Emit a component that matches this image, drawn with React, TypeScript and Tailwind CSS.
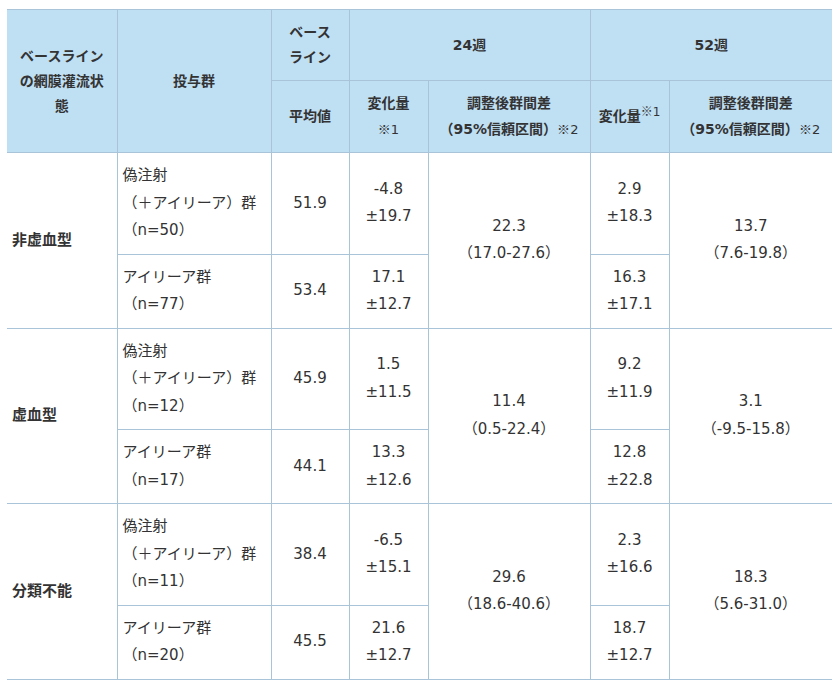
const FONT = { fontFamily: '"DejaVu Sans", "Noto Sans CJK JP", sans-serif' };
const CJK = { fontFamily: '"Noto Sans CJK JP", sans-serif' };

type Sub = { group: string[]; base: string; c24: string[]; c52: string[] };
type Section = { label: string; d24: string[]; d52: string[]; rows: Sub[] };

const SECTIONS: Section[] = [
  {
    label: '非虚血型',
    d24: ['22.3', '（17.0-27.6）'],
    d52: ['13.7', '（7.6-19.8）'],
    rows: [
      { group: ['偽注射', '（＋アイリーア）群', '（n=50）'], base: '51.9', c24: ['-4.8', '±19.7'], c52: ['2.9', '±18.3'] },
      { group: ['アイリーア群', '（n=77）'], base: '53.4', c24: ['17.1', '±12.7'], c52: ['16.3', '±17.1'] },
    ],
  },
  {
    label: '虚血型',
    d24: ['11.4', '（0.5-22.4）'],
    d52: ['3.1', '（-9.5-15.8）'],
    rows: [
      { group: ['偽注射', '（＋アイリーア）群', '（n=12）'], base: '45.9', c24: ['1.5', '±11.5'], c52: ['9.2', '±11.9'] },
      { group: ['アイリーア群', '（n=17）'], base: '44.1', c24: ['13.3', '±12.6'], c52: ['12.8', '±22.8'] },
    ],
  },
  {
    label: '分類不能',
    d24: ['29.6', '（18.6-40.6）'],
    d52: ['18.3', '（5.6-31.0）'],
    rows: [
      { group: ['偽注射', '（＋アイリーア）群', '（n=11）'], base: '38.4', c24: ['-6.5', '±15.1'], c52: ['2.3', '±16.6'] },
      { group: ['アイリーア群', '（n=20）'], base: '45.5', c24: ['21.6', '±12.7'], c52: ['18.7', '±12.7'] },
    ],
  },
];

const th = 'border border-[#a9c4d8] bg-[#bfdff3] px-[5px] py-[10px] text-center align-middle text-[14px] font-bold leading-[25px] text-[#333]';
const td = 'border border-[#a9c4d8] bg-white px-[5px] py-[9px] align-middle text-[15px] leading-[27.5px] text-[#333]';

function Lines({ items }: { items: string[] }) {
  return (
    <>
      {items.map((t, i) => (
        <div key={i}>{t}</div>
      ))}
    </>
  );
}

function Note({ n, raised }: { n: string; raised?: boolean }) {
  return (
    <span className={`font-normal ${raised ? 'relative -top-[5px] text-[12px]' : 'text-[13px]'}`}>
      <span style={CJK}>※</span>
      {n}
    </span>
  );
}

export default function App() {
  return (
    <div className="min-h-[689px] bg-white pt-[9px] pl-[7px]" style={FONT}>
      <table className="w-[825px] table-fixed border-collapse">
        <colgroup>
          <col className="w-[110px]" />
          <col className="w-[154px]" />
          <col className="w-[78px]" />
          <col className="w-[79px]" />
          <col className="w-[162px]" />
          <col className="w-[79px]" />
          <col className="w-[163px]" />
        </colgroup>
        <thead>
          <tr>
            <th rowSpan={2} className={`${th} border-l-0`}>
              ベースライン
              <br />
              の網膜灌流状
              <br />態
            </th>
            <th rowSpan={2} className={th}>投与群</th>
            <th className={th}>
              ベース
              <br />
              ライン
            </th>
            <th colSpan={2} className={th}>24週</th>
            <th colSpan={2} className={`${th} border-r-0`}>52週</th>
          </tr>
          <tr>
            <th className={th}>平均値</th>
            <th className={th}>
              変化量
              <br />
              <Note n="1" />
            </th>
            <th className={th}>
              調整後群間差
              <br />
              （95%信頼区間）<Note n="2" />
            </th>
            <th className={th}>
              変化量<Note n="1" raised />
            </th>
            <th className={`${th} border-r-0`}>
              調整後群間差
              <br />
              （95%信頼区間）<Note n="2" />
            </th>
          </tr>
        </thead>
        <tbody>
          {SECTIONS.map((s) =>
            s.rows.map((r, i) => (
              <tr key={s.label + i}>
                {i === 0 && (
                  <td rowSpan={2} className={`${td} border-l-0 bg-[#deeefa] text-left font-bold text-[14px]`}>
                    {s.label}
                  </td>
                )}
                <td className={`${td} text-left`}>
                  <Lines items={r.group} />
                </td>
                <td className={`${td} text-center`}>{r.base}</td>
                <td className={`${td} text-center`}>
                  <Lines items={r.c24} />
                </td>
                {i === 0 && (
                  <td rowSpan={2} className={`${td} text-center`}>
                    <Lines items={s.d24} />
                  </td>
                )}
                <td className={`${td} text-center`}>
                  <Lines items={r.c52} />
                </td>
                {i === 0 && (
                  <td rowSpan={2} className={`${td} border-r-0 text-center`}>
                    <Lines items={s.d52} />
                  </td>
                )}
              </tr>
            ))
          )}
        </tbody>
      </table>
    </div>
  );
}
